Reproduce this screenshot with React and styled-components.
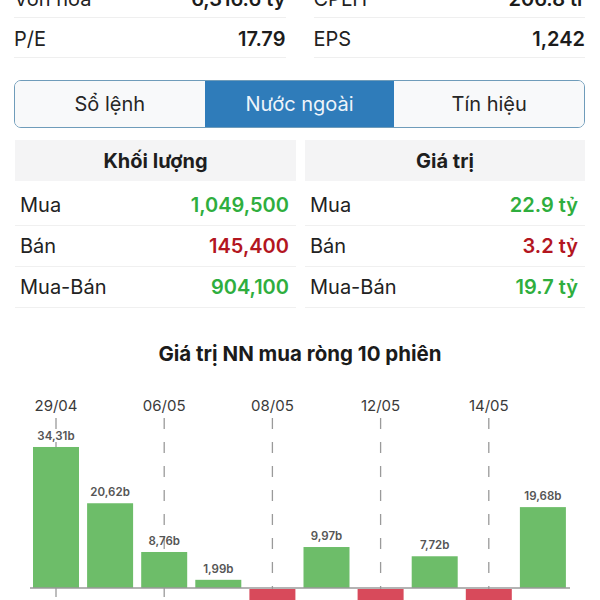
import React from 'react'
import styled, { createGlobalStyle } from 'styled-components'

const Global = createGlobalStyle`
  html, body {
    margin: 0;
    padding: 0;
    background: #fff;
    overflow: hidden;
  }
  body {
    font-family: 'Inter', 'Roboto', sans-serif;
    color: #222;
  }
`

const Page = styled.div`
  width: 600px;
  margin-top: -22px;
`
const Section = styled.div`
  padding: 0 15px 0 14px;
`
const StatsGrid = styled.div`
  display: grid;
  grid-template-columns: 1fr 1fr;
  column-gap: 28px;
`
const StatRow = styled.div`
  height: 40px;
  display: flex;
  align-items: center;
  justify-content: space-between;
  border-bottom: 1px solid #efefef;
  font-size: 20px;
  padding-top: 2px;
  box-sizing: border-box;
`
const StatValue = styled.span`
  font-weight: 600;
  color: #1c1c1c;
`
const Tabs = styled.div`
  margin-top: 22px;
  display: flex;
  height: 48px;
  border: 1.5px solid #6f9cba;
  border-radius: 7px;
  overflow: hidden;
  box-sizing: border-box;
`
const Tab = styled.div`
  flex: 1;
  display: flex;
  align-items: center;
  justify-content: center;
  font-size: 20px;
  background: ${p => (p.active ? '#2f7cba' : '#f8f9fa')};
  color: ${p => (p.active ? '#eef4fa' : '#262626')};
`
const TableGrid = styled.div`
  margin-top: 12px;
  display: grid;
  grid-template-columns: 281px 280px;
  column-gap: 9px;
  padding-left: 1px;
`
const TableHead = styled.div`
  height: 41px;
  display: flex;
  align-items: center;
  justify-content: center;
  background: #f4f4f5;
  font-size: 20px;
  font-weight: 700;
  color: #1e1e1e;
  margin-bottom: 4px;
`
const TableRow = styled.div`
  height: 41px;
  display: flex;
  align-items: center;
  justify-content: space-between;
  padding: 0 7px 0 5px;
  border-bottom: 1px solid #f0f0f0;
  font-size: 20px;
  box-sizing: border-box;
`
const Value = styled.span`
  font-weight: 600;
  color: ${p => (p.down ? '#b3161f' : '#2fae3e')};
`
const ChartTitle = styled.div`
  margin-top: 34px;
  text-align: center;
  font-size: 20.5px;
  line-height: 24px;
  font-weight: 700;
  color: #1b1b1b;
`
const ChartBox = styled.svg`
  display: block;
  margin-top: 26px;
`

const stats = [
  [['Vốn hoá', '6,316.6 tỷ'], ['P/E', '17.79']],
  [['CPLH', '206.8 tr'], ['EPS', '1,242']],
]

const tables = [
  {
    title: 'Khối lượng',
    rows: [
      ['Mua', '1,049,500'],
      ['Bán', '145,400', true],
      ['Mua-Bán', '904,100'],
    ],
  },
  {
    title: 'Giá trị',
    rows: [
      ['Mua', '22.9 tỷ'],
      ['Bán', '3.2 tỷ', true],
      ['Mua-Bán', '19.7 tỷ'],
    ],
  },
]

const bars = [34.31, 20.62, 8.76, 1.99, -6, 9.97, -5, 7.72, -5, 19.68]
const dates = ['29/04', '06/05', '08/05', '12/05', '14/05']

// svg top sits at page y ~392
const BASE = 196
const SCALE = 4.11

const Chart = () => {
  const cx = i => 56 + i * 54.1
  return (
    <ChartBox width="600" height="230" viewBox="0 0 600 230">
      {dates.map((d, k) => (
        <g key={d}>
          <text
            x={cx(k * 2)}
            y="19"
            textAnchor="middle"
            fontSize="15"
            fill="#3a3a3a"
            fontFamily="Inter, sans-serif"
          >
            {d}
          </text>
          <line
            x1={cx(k * 2)}
            x2={cx(k * 2)}
            y1="26"
            y2="230"
            stroke="#9a9a9a"
            strokeWidth="1.3"
            strokeDasharray="11 13"
          />
        </g>
      ))}
      {bars.map((v, i) => {
        const h = Math.abs(v) * SCALE
        const up = v > 0
        return (
          <g key={i}>
            <rect
              x={cx(i) - 23}
              y={up ? BASE - h : BASE + 1}
              width="46"
              height={up ? h : 40}
              fill={up ? '#6dbd69' : '#d84a5b'}
            />
            {up && (
              <text
                x={cx(i)}
                y={BASE - h - 7}
                textAnchor="middle"
                fontSize="11.5"
                fontWeight="600"
                fill="#555"
                fontFamily="Inter, sans-serif"
              >
                {v.toFixed(2).replace('.', ',')}b
              </text>
            )}
          </g>
        )
      })}
      <line x1="30" x2="570" y1={BASE} y2={BASE} stroke="#9a9a9a" strokeWidth="1.5" />
    </ChartBox>
  )
}

const App = () => {
  return (
    <Page>
      <Global />
      <Section>
        <StatsGrid>
          {stats.map((col, c) => (
            <div key={c}>
              {col.map(([label, val]) => (
                <StatRow key={label}>
                  <span>{label}</span>
                  <StatValue>{val}</StatValue>
                </StatRow>
              ))}
            </div>
          ))}
        </StatsGrid>
        <Tabs>
          <Tab>Sổ lệnh</Tab>
          <Tab active>Nước ngoài</Tab>
          <Tab>Tín hiệu</Tab>
        </Tabs>
        <TableGrid>
          {tables.map(t => (
            <div key={t.title}>
              <TableHead>{t.title}</TableHead>
              {t.rows.map(([label, val, down]) => (
                <TableRow key={label}>
                  <span>{label}</span>
                  <Value down={down}>{val}</Value>
                </TableRow>
              ))}
            </div>
          ))}
        </TableGrid>
      </Section>
      <ChartTitle>Giá trị NN mua ròng 10 phiên</ChartTitle>
      <Chart />
    </Page>
  )
}

export default App
